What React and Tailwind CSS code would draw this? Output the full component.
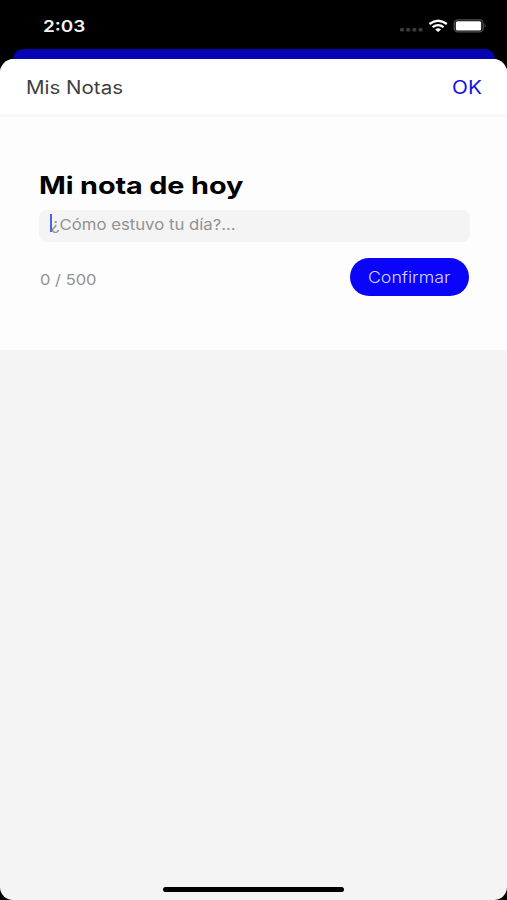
function StatusIcons() {
  return (
    <svg className="block h-[16px] w-[88px]" viewBox="399 18 88 16">
      <g fill="#3c3c3c">
        <rect x="400" y="28" width="4" height="3.6" rx="1.4" />
        <rect x="406.2" y="28" width="4" height="3.6" rx="1.4" />
        <rect x="412.4" y="28" width="4" height="3.6" rx="1.4" />
        <rect x="418.6" y="28" width="4" height="3.6" rx="1.4" />
      </g>
      <g fill="none" stroke="#fff" strokeWidth="2.3">
        <path d="M429.4 24 Q438.1 17.4 446.8 24" />
        <path d="M432.6 27.2 Q438.1 23 443.6 27.2" />
      </g>
      <path d="M435.2 29.4 Q438.1 27.2 441 29.4 L438.1 32 Z" fill="#fff" />
      <rect x="454.2" y="19.9" width="29" height="12" rx="3.6" fill="none" stroke="#505050" strokeWidth="1.3" />
      <rect x="455.8" y="21.2" width="25.4" height="9.4" rx="1.6" fill="#fff" />
      <path d="M484.6 23.8 Q486.8 25.8 484.6 27.8 Z" fill="#505050" />
    </svg>
  );
}

export default function App() {
  return (
    <div className="h-[900px] w-[507px] overflow-hidden bg-black font-['Inter','Liberation_Sans',sans-serif]">
      <div className="flex h-[49px] items-start justify-between pl-[43px] pr-[20px]">
        <span className="mt-[14px] origin-left scale-x-[1.18] text-[16px] leading-[24px] font-semibold text-[#f4f4f4]">2:03</span>
        <div className="mt-[18px]"><StatusIcons /></div>
      </div>
      <div className="ml-[13px] mr-[12px] h-[10px] rounded-t-[12px] bg-[#0505b4]" />
      <main className="flex h-[841px] flex-col overflow-hidden rounded-t-[14px] rounded-b-[13px] bg-[#f4f4f4]">
        <header className="flex h-[58px] shrink-0 items-center justify-between border-b-[3px] border-[#f8f8f8] bg-white pt-[2px] pl-[26px] pr-[25px]">
          <h1 className="origin-left scale-x-[1.14] text-[18px] leading-[26px] text-[#404040]">Mis Notas</h1>
          <button className="origin-right scale-x-[1.15] text-[18px] leading-[26px] text-[#1414e6]">OK</button>
        </header>
        <section className="h-[233px] shrink-0 bg-[#fdfdfd] pl-[39px] pr-[37px] pt-[53px]">
          <h2 className="w-max origin-left scale-x-[1.2] text-[24px] leading-[32px] font-bold tracking-[-0.1px] text-black">Mi nota de hoy</h2>
          <div className="mt-[8px] flex h-[32px] rounded-[8px] bg-[#f4f4f4] pl-[11px]">
            <div className="mt-[4px] h-[18px] w-[2px] bg-[#4565ec]" />
            <span className="mt-[4px] -ml-px origin-left scale-x-[1.115] text-[15px] leading-[22px] text-[#929292]">¿Cómo estuvo tu día?...</span>
          </div>
          <div className="mt-[16px] flex items-start justify-between pr-px">
            <span className="mt-[11px] ml-px origin-left scale-x-[1.1] text-[15px] leading-[22px] text-[#929292]">0 / 500</span>
            <button className="flex h-[38px] w-[119px] items-center justify-center rounded-full bg-[#0a05fa] text-[#d8d8ff]">
              <span className="scale-x-[1.11] text-[16px] leading-[24px] font-light">Confirmar</span>
            </button>
          </div>
        </section>
        <div className="mx-auto mt-auto mb-[8px] h-[5px] w-[181px] rounded-full bg-black" />
      </main>
    </div>
  );
}
